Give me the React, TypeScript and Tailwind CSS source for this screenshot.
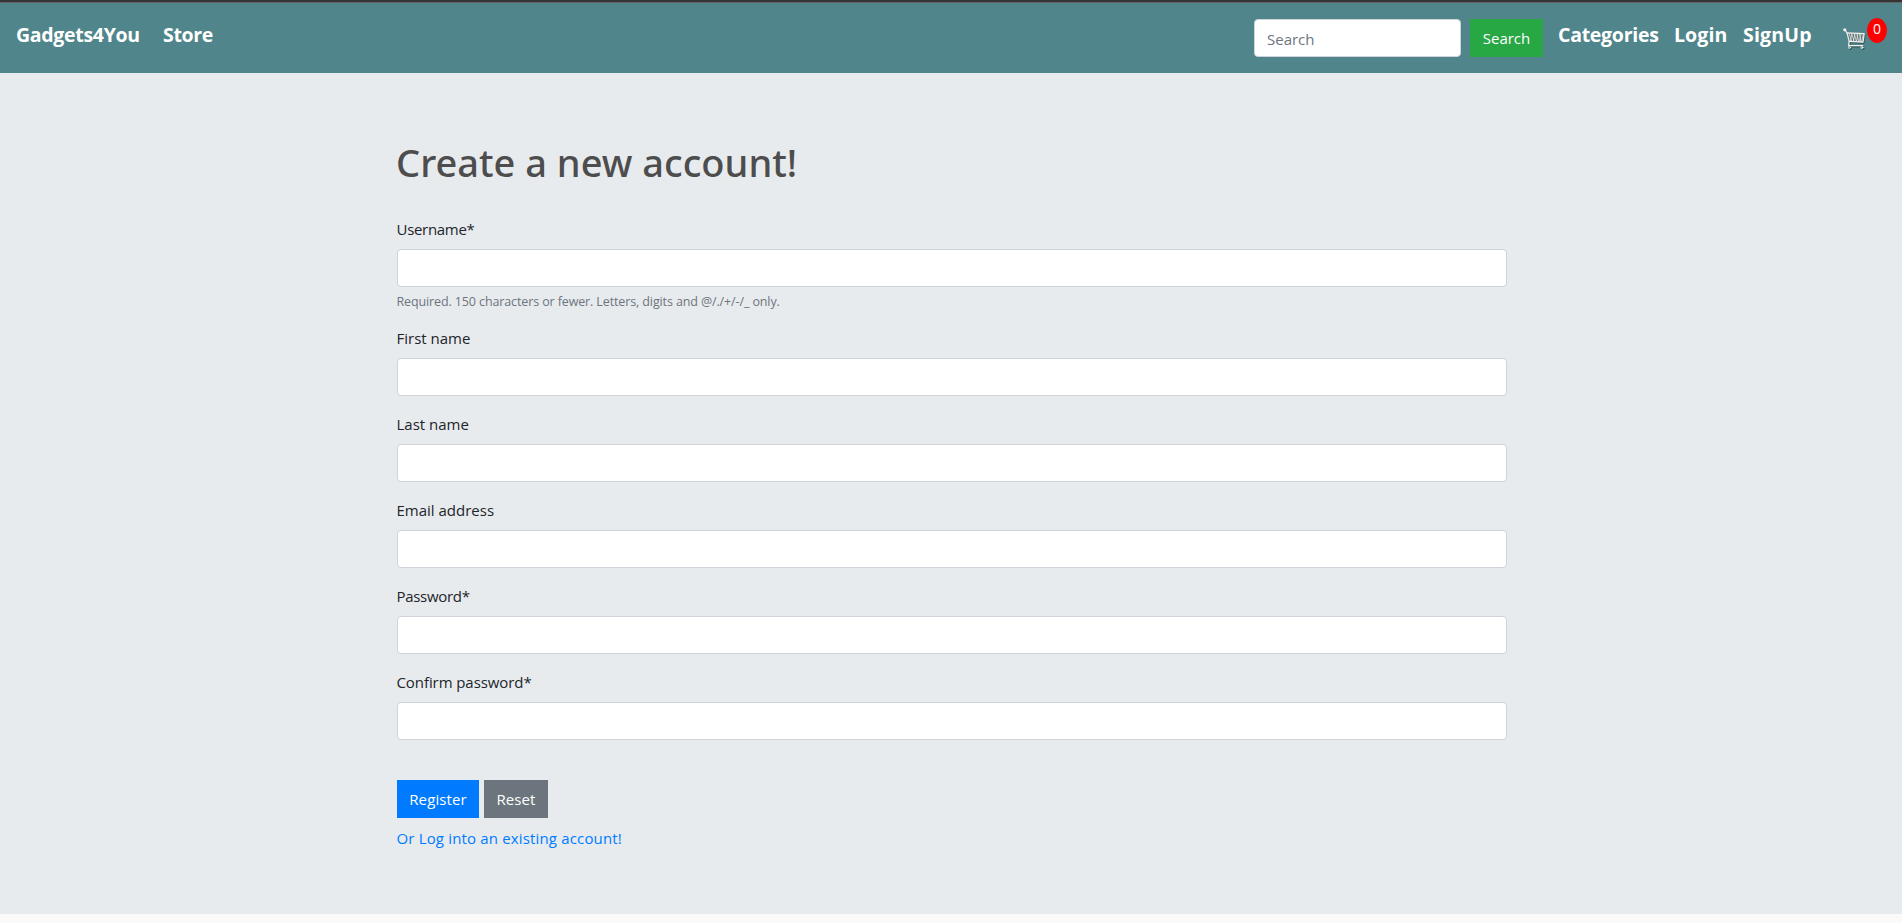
import React from "react";

function CartIcon() {
  return (
    <svg width="26" height="26" viewBox="0 0 26 26" fill="none" strokeLinecap="round" strokeLinejoin="round">
      <g stroke="#2c4c50" strokeOpacity="0.75" transform="translate(0.8 1)">
        <path d="M3 4 L5 6.6 L7.2 16 L7 19.7 H20.8" strokeWidth="1.4" />
        <path d="M5 6.8 L22.2 7.6 L21 16.2 L7.2 15.4" strokeWidth="1.4" />
        <circle cx="7.4" cy="21.6" r="1.1" />
        <circle cx="20" cy="21.6" r="1.1" />
      </g>
      <path d="M5 6.8 L22.2 7.6 L21 16.2 L7.2 15.4 Z" fill="#5d7477" />
      <g stroke="#f1f1ee">
        <path d="M3.4 4.4 L5 6.8 L7.2 15.4 L6.6 19.6 H20.8" strokeWidth="1.2" />
        <path d="M5 6.8 L22.2 7.6 L21 16.2 L7.2 15.4" strokeWidth="1.2" />
        <path
          d="M7 7.5 L9.6 15 M9.6 7.5 L12 15 M12.2 7.6 L14.4 15.4 M14.8 7.7 L16.8 15.6 M17.4 7.8 L19 15.7 M9.8 7.6 L8.4 15 M13 7.6 L11.4 15 M16 7.6 L14.4 15.4 M19 7.8 L17.4 15.6 M21.4 8 L19.6 15.8"
          strokeWidth="0.7"
        />
        <circle cx="7.4" cy="21.5" r="1" strokeWidth="0.9" />
        <circle cx="20" cy="21.5" r="1" strokeWidth="0.9" />
      </g>
      <circle cx="2.8" cy="3.8" r="1.6" fill="#f1f1ee" />
    </svg>
  );
}

type FieldProps = { id: string; label: string; tracking: string; type?: string; help?: string };

const fields: FieldProps[] = [
  {
    id: "username",
    label: "Username*",
    tracking: "tracking-[-0.3px]",
    help: "Required. 150 characters or fewer. Letters, digits and @/./+/-/_ only.",
  },
  { id: "first", label: "First name", tracking: "tracking-normal" },
  { id: "last", label: "Last name", tracking: "tracking-normal" },
  { id: "email", label: "Email address", tracking: "tracking-normal" },
  { id: "password", label: "Password*", tracking: "tracking-[-0.3px]", type: "password" },
  { id: "confirm", label: "Confirm password*", tracking: "tracking-[-0.08px]", type: "password" },
];

function Field({ id, label, tracking, type = "text", help }: FieldProps) {
  return (
    <div className="mb-4">
      <label htmlFor={id} className={`mb-2 -ml-[0.5px] block leading-6 ${tracking}`}>
        {label}
      </label>
      <input id={id} type={type} className="block h-[38px] w-full rounded border border-[#ced4da] bg-white px-3" />
      {help && (
        <small className="mt-1 -ml-[0.5px] block h-[19px] text-[12.5px] leading-[22px] tracking-[-0.12px] text-[#6c757d]">
          {help}
        </small>
      )}
    </div>
  );
}

export default function App() {
  return (
    <div className="flex min-h-screen flex-col bg-[#fafafa] font-['Open_Sans','Noto_Sans',sans-serif] text-[15px] text-[#212529]">
      <div className="h-[3px] border-b border-[#666] bg-[#343434]" />
      <nav className="flex h-[70px] items-start justify-between bg-[#50868b] pl-4 pr-[15px] pt-4 text-white">
        <div className="flex text-[19.5px] leading-[32px] font-bold">
          <a href="#" className="w-[147px] tracking-[-0.3px]">Gadgets4You</a>
          <a href="#" className="tracking-[-0.35px]">Store</a>
        </div>
        <div className="flex items-start">
          <input
            placeholder="Search"
            aria-label="Search"
            className="h-[38px] w-[207px] rounded border border-[#ced4da] bg-white px-3 pt-[2px] placeholder:text-[#6c757d]"
          />
          <button className="ml-[9px] h-[38px] w-[73px] bg-[#28a745]">Search</button>
          <div className="flex text-[19.5px] leading-[32px] font-bold">
            <a href="#" className="ml-[15px] w-[116px] tracking-[-0.27px]">Categories</a>
            <a href="#" className="w-[69px] tracking-[0.1px]">Login</a>
            <a href="#" className="w-[99px] tracking-[0.18px]">SignUp</a>
          </div>
          <a href="#" className="flex items-start">
            <span className="mt-[7px]"><CartIcon /></span>
            <span className="-mt-px -ml-px flex h-[25px] w-5 justify-center rounded-[50%] bg-[red] text-[14px] leading-[22px]">0</span>
          </a>
        </div>
      </nav>
      <main className="h-[841px] bg-[#e8ebee]">
        <div className="relative left-[1px] mx-auto w-[1110px] pt-[65px]">
          <h1 className="mb-[31px] -ml-px font-['Noto_Sans','Open_Sans',sans-serif] text-[38px] leading-[48px] font-medium text-[#4d4d4d]">
            Create a new account!
          </h1>
          <form>
            {fields.map((f) => (
              <Field key={f.id} {...f} />
            ))}
            <div className="flex gap-[5px] pt-6 text-white">
              <button type="button" className="h-[38px] w-[82px] bg-[#007bff] tracking-[0.1px]">Register</button>
              <button type="reset" className="h-[38px] w-[64px] bg-[#6c757d] tracking-[0.1px]">Reset</button>
            </div>
            <a href="#" className="mt-2 -ml-[0.5px] block leading-6 tracking-[0.16px] text-[#007bff]">
              Or Log into an existing account!
            </a>
          </form>
        </div>
      </main>
    </div>
  );
}
